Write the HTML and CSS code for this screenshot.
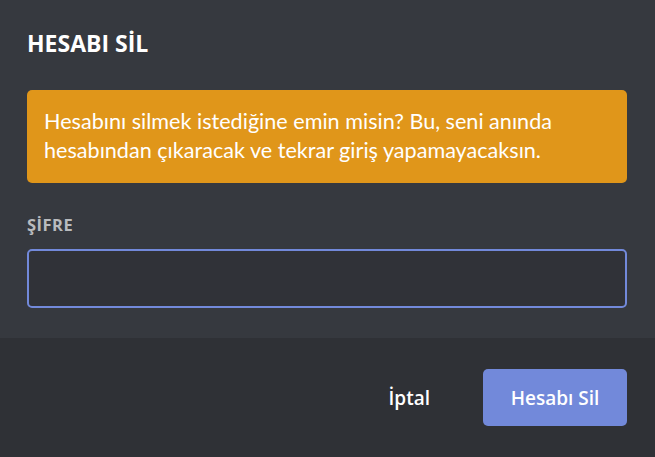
FILE: index.html
```html
<!DOCTYPE html>
<html lang="tr">
<head>
<meta charset="utf-8">
<link rel="stylesheet" href="styles.css">
</head>
<body>
<div class="modal">
  <div class="modal-body">
    <h4 class="title">HESABI SİL</h4>
    <div class="warning">Hesabını silmek istediğine emin misin? Bu, seni anında hesabından çıkaracak ve tekrar giriş yapamayacaksın.</div>
    <h5 class="label">Şİfre</h5>
    <input class="input" type="password">
  </div>
  <div class="footer">
    <button class="btn-cancel">İptal</button>
    <button class="btn-danger">Hesabı Sil</button>
  </div>
</div>
</body>
</html>
```

FILE: styles.css
```css
html, body {
  margin: 0;
  padding: 0;
  background: #36393f;
}
.modal {
  width: 655px;
  height: 457px;
  display: flex;
  flex-direction: column;
  background: #36393f;
  font-family: "Open Sans", sans-serif;
}
.modal-body {
  padding: 28px 28px 30px 27px;
  display: flex;
  flex-direction: column;
}
.title {
  margin: 0 0 31px 0;
  font-size: 23px;
  font-weight: 700;
  color: #ffffff;
  line-height: 31px;
}
.warning {
  background: #e0961a;
  color: #ffffff;
  border-radius: 5px;
  padding: 17px 17px 18px 17px;
  font-family: Lato, sans-serif;
  font-size: 21.6px;
  line-height: 29px;
}
.label {
  margin: 32px 0 14px 0;
  font-size: 16.5px;
  line-height: 20px;
  font-weight: 700;
  letter-spacing: 0.5px;
  color: #b9bbbe;
  text-transform: uppercase;
}
.input {
  box-sizing: border-box;
  height: 59px;
  width: 100%;
  margin: 0;
  background: #303238;
  border: 2px solid #7289da;
  border-radius: 5px;
  outline: none;
}
.footer {
  flex: 1;
  background: #2f3136;
  display: flex;
  align-items: center;
  justify-content: flex-end;
  padding: 0 28px 0 0;
}
.btn-cancel {
  background: none;
  border: none;
  color: #ffffff;
  font-family: "Open Sans", sans-serif;
  font-size: 19px;
  font-weight: 600;
  padding: 0 26px;
  margin-right: 27px;
  height: 57px;
}
.btn-danger {
  width: 144px;
  height: 57px;
  background: #7289da;
  color: #ffffff;
  border: none;
  border-radius: 5px;
  font-family: "Open Sans", sans-serif;
  font-size: 19px;
  font-weight: 600;
  padding: 0;
}
```
